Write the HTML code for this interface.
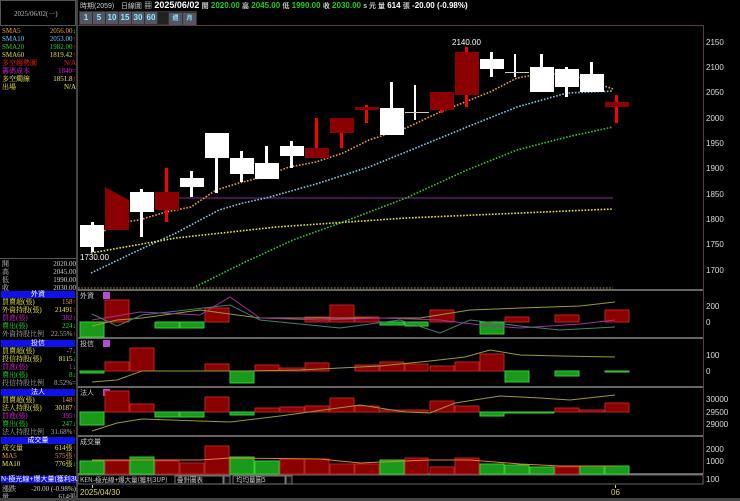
<!DOCTYPE html>
<html><head><meta charset="utf-8"><style>
*{margin:0;padding:0;box-sizing:border-box}
body{width:740px;height:501px;background:#000;overflow:hidden;position:relative;font-family:"Liberation Sans","Noto Sans CJK TC",sans-serif;color:#ccc}
.a{position:absolute;white-space:nowrap}
.s{font-size:7px;line-height:8px;font-family:"Liberation Serif","Noto Serif CJK SC",serif}
.hd{background:#1010e8;color:#fff;text-align:center;font-size:7px;line-height:7px}
</style></head><body>
<!-- left panel -->
<div class="a" style="left:0;top:0;width:76px;height:26px;border:1px solid #555;background:#000"></div>
<div class="a s" style="left:14px;top:10px;color:#bbb">2025/06/02(一)</div>
<div class="a" style="left:76px;top:0;width:2px;height:501px;background:#444"></div>
<div class="a s" style="left:2px;top:27px;width:74px">
<div style="color:#e0a040">SMA5<span style="float:right">2056.00<b style="color:#2d2">↓</b></span></div>
<div style="color:#6cf">SMA10<span style="float:right">2053.00<b style="color:#f22">↑</b></span></div>
<div style="color:#2c2">SMA20<span style="float:right">1982.00<b style="color:#f22">↑</b></span></div>
<div style="color:#dd4">SMA60<span style="float:right">1819.42<b style="color:#f22">↑</b></span></div>
<div style="color:#f22">多空趨勢圖<span style="float:right">N/A</span></div>
<div style="color:#d2d">籌碼成本<span style="float:right">1840=</span></div>
<div style="color:#ee4">多空燭線<span style="float:right">1851.8<b style="color:#f22">↑</b></span></div>
<div style="color:#ee4">出場<span style="float:right">N/A</span></div>
</div>
<div class="a" style="left:0;top:258px;width:76px;height:1px;background:#555"></div>
<div class="a s" style="left:2px;top:260px;width:74px;color:#ccc">
<div>開<span style="float:right">2020.00</span></div><div>高<span style="float:right">2045.00</span></div><div>低<span style="float:right">1990.00</span></div><div>收<span style="float:right">2030.00</span></div></div>
<div class="a hd" style="left:1px;top:291px;width:74px">外資</div>
<div class="a s" style="left:2px;top:298px;width:74px">
<div style="color:#ee4">買賣超(張)<span style="float:right;color:#e0a040">158<b style="color:#f22">↑</b></span></div>
<div style="color:#ee4">外資持股(張)<span style="float:right">21491<b style="color:#f22">↑</b></span></div>
<div style="color:#d2d">買進(張)<span style="float:right">382<b style="color:#f22">↑</b></span></div>
<div style="color:#2d2">賣出(張)<span style="float:right">224<b style="color:#2d2">↓</b></span></div>
<div style="color:#aaa">外資持股比例<span style="float:right">22.55%<b style="color:#f22">↑</b></span></div></div>
<div class="a hd" style="left:1px;top:340px;width:74px">投信</div>
<div class="a s" style="left:2px;top:347px;width:74px">
<div style="color:#ee4">買賣超(張)<span style="float:right;color:#e0a040">-7<b style="color:#2d2">↓</b></span></div>
<div style="color:#ee4">投信持股(張)<span style="float:right">8115<b style="color:#2d2">↓</b></span></div>
<div style="color:#d2d">買進(張)<span style="float:right">1<b style="color:#2d2">↓</b></span></div>
<div style="color:#2d2">賣出(張)<span style="float:right">8<b style="color:#2d2">↓</b></span></div>
<div style="color:#aaa">投信持股比例<span style="float:right">8.52%=</span></div></div>
<div class="a hd" style="left:1px;top:389px;width:74px">法人</div>
<div class="a s" style="left:2px;top:396px;width:74px">
<div style="color:#ee4">買賣超(張)<span style="float:right;color:#e0a040">148<b style="color:#f22">↑</b></span></div>
<div style="color:#ee4">法人持股(張)<span style="float:right">30187<b style="color:#f22">↑</b></span></div>
<div style="color:#d2d">買進(張)<span style="float:right">395<b style="color:#f22">↑</b></span></div>
<div style="color:#2d2">賣出(張)<span style="float:right">247<b style="color:#2d2">↓</b></span></div>
<div style="color:#aaa">法人持股比例<span style="float:right">31.68%<b style="color:#f22">↑</b></span></div></div>
<div class="a hd" style="left:1px;top:437px;width:74px">成交量</div>
<div class="a s" style="left:2px;top:444px;width:74px">
<div style="color:#ee4">成交量<span style="float:right">614張<b style="color:#f22">↑</b></span></div>
<div style="color:#e0a040">MA5<span style="float:right">575張<b style="color:#f22">↑</b></span></div>
<div style="color:#ee4">MA10<span style="float:right">776張<b style="color:#2d2">↓</b></span></div></div>
<div class="a hd" style="left:1px;top:476px;width:75px;text-align:left">N-極光線+爆大量(獲利3U)</div>
<div class="a s" style="left:2px;top:485px;width:74px;color:#ccc"><div>漲跌<span style="float:right">-20.00 (-0.98%)</span></div><div>量<span style="float:right">614張</span></div></div>

<!-- header -->
<div class="a" style="left:80px;top:1px;font-size:8px;line-height:9px;color:#ccc;font-weight:bold">
<span style="font-weight:normal;font-size:7px">時期(2059)</span>&nbsp;&nbsp;&nbsp;<span style="font-weight:normal;font-size:7px">日線圖</span> ▦ <span style="color:#fff;font-size:9px">2025/06/02</span> <span style="font-size:7px">開</span> <span style="color:#2c2">2020.00</span> <span style="font-size:7px">高</span> <span style="color:#2c2">2045.00</span> <span style="font-size:7px">低</span> <span style="color:#2c2">1990.00</span> <span style="font-size:7px">收</span> <span style="color:#2c2">2030.00</span> <span style="font-size:7px">s 元 量</span> <span style="color:#fff">614</span> <span style="font-size:7px">張</span> <span style="color:#fff">-20.00 (-0.98%)</span></div>
<div class="a" style="left:79px;top:11px;height:14px;background:#333;width:118px"></div>
<div class="a" style="left:80px;top:12px;font-size:8px;line-height:12px;color:#8ef;font-weight:bold">
<span style="display:inline-block;width:12px;text-align:center;background:#556">1</span><span style="display:inline-block;width:12px;text-align:center;background:#556;margin-left:1px">5</span><span style="display:inline-block;width:12px;text-align:center;background:#556;margin-left:1px">10</span><span style="display:inline-block;width:12px;text-align:center;background:#556;margin-left:1px">15</span><span style="display:inline-block;width:12px;text-align:center;background:#556;margin-left:1px">30</span><span style="display:inline-block;width:12px;text-align:center;background:#556;margin-left:1px">60</span><span style="display:inline-block;width:10px;background:#222;margin-left:1px">&nbsp;</span><span style="display:inline-block;width:13px;text-align:center;background:#556;font-size:6px;margin-left:1px">週</span><span style="display:inline-block;width:13px;text-align:center;background:#556;font-size:6px;margin-left:1px">月</span></div>

<svg class="a" style="left:0;top:0" width="740" height="501">
<g fill="none" stroke="#5a3a3a"><line x1="78" y1="25.5" x2="703" y2="25.5"/><line x1="703.5" y1="25" x2="703.5" y2="474"/></g>
<g fill="none" stroke="#888" stroke-width="1.5"><line x1="78" y1="290" x2="703" y2="290"/><line x1="78" y1="338" x2="703" y2="338"/><line x1="78" y1="387" x2="703" y2="387"/><line x1="78" y1="436" x2="703" y2="436"/><line x1="78" y1="474" x2="703" y2="474"/></g>
<!-- axis labels -->
<g font-size="8" fill="#ddd" font-family="Liberation Sans,sans-serif">
<text x="706" y="45">2150</text><text x="706" y="70">2100</text><text x="706" y="95">2050</text><text x="706" y="121">2000</text><text x="706" y="146">1950</text><text x="706" y="171">1900</text><text x="706" y="197">1850</text><text x="706" y="222">1800</text><text x="706" y="247">1750</text><text x="706" y="273">1700</text>
<text x="706" y="309">200</text><text x="706" y="325">0</text><text x="706" y="358">100</text><text x="706" y="374">0</text>
<text x="706" y="402">30000</text><text x="706" y="415">29500</text><text x="706" y="427">29000</text>
<text x="706" y="452">2000</text><text x="706" y="464">1000</text><text x="706" y="482">100</text>
<text x="80" y="260" fill="#fff">1730.00</text><text x="452" y="45" fill="#fff">2140.00</text>
</g>
<!-- MAs -->
<g fill="none" stroke-width="1.6" stroke-dasharray="1.6 1.6">
<line x1="130" y1="198" x2="613" y2="198" stroke="#8a2a9a" stroke-dasharray="none" stroke-width="1"/>
<polyline stroke="#e8a040" points="91,240 116,223 139,220 166,212 191,207 216,190 239,183 263,177 289,167 316,162 343,153 369,140 406,128 440,112 490,92 517,78 540,74 567,74 587,80 613,89"/>
<polyline stroke="#80c8e8" points="91,273 139,250 176,233 219,210 243,203 266,198 316,184 369,167 406,152 467,127 517,107 567,93 613,91"/>
<polyline stroke="#2ec82e" points="193,288 243,263 293,240 343,222 406,198 467,170 517,150 567,137 613,127"/>
<polyline stroke="#e8e840" points="91,253 176,238 276,227 406,218 613,209"/>
<line x1="78" y1="288" x2="613" y2="288" stroke="#806030"/>
</g>
<!-- candles -->
<g>
<rect x="91" y="222" width="3" height="30" fill="#fff"/><rect x="80" y="225" width="24" height="22" fill="#fff"/>
<polygon points="105,187 129,200 129,230 105,230" fill="#8b0000"/>
<rect x="140" y="189" width="3" height="48" fill="#fff"/><rect x="130" y="192" width="24" height="20" fill="#fff"/>
<rect x="165" y="168" width="3" height="54" fill="#f00"/><rect x="155" y="192" width="24" height="18" fill="#8b0000"/>
<rect x="190" y="171" width="3" height="26" fill="#fff"/><rect x="180" y="178" width="24" height="9" fill="#fff"/>
<rect x="215" y="133" width="3" height="60" fill="#fff"/><rect x="205" y="133" width="24" height="25" fill="#fff"/>
<rect x="240" y="151" width="3" height="31" fill="#fff"/><rect x="230" y="158" width="24" height="16" fill="#fff"/>
<rect x="265" y="146" width="3" height="33" fill="#fff"/><rect x="255" y="163" width="24" height="16" fill="#fff"/>
<rect x="290" y="141" width="3" height="27" fill="#fff"/><rect x="280" y="146" width="24" height="10" fill="#fff"/>
<rect x="315" y="118" width="3" height="40" fill="#f00"/><rect x="305" y="148" width="24" height="10" fill="#8b0000"/>
<rect x="340" y="118" width="3" height="30" fill="#f00"/><rect x="330" y="118" width="24" height="15" fill="#8b0000"/>
<rect x="365" y="105" width="3" height="18" fill="#f00"/><rect x="355" y="107" width="24" height="3" fill="#8b0000"/>
<rect x="390" y="82" width="3" height="53" fill="#fff"/><rect x="380" y="108" width="24" height="27" fill="#fff"/>
<rect x="414" y="85" width="2" height="35" fill="#fff"/><rect x="405" y="112" width="24" height="1" fill="#ccc"/>
<rect x="440" y="92" width="3" height="21" fill="#f00"/><rect x="430" y="92" width="24" height="18" fill="#8b0000"/>
<rect x="465" y="47" width="3" height="60" fill="#f00"/><rect x="455" y="52" width="24" height="43" fill="#8b0000"/>
<rect x="490" y="52" width="3" height="25" fill="#fff"/><rect x="480" y="59" width="24" height="10" fill="#fff"/>
<rect x="514" y="54" width="2" height="23" fill="#fff"/><rect x="505" y="72" width="24" height="1" fill="#ccc"/>
<rect x="540" y="54" width="3" height="38" fill="#fff"/><rect x="530" y="67" width="24" height="25" fill="#fff"/>
<rect x="565" y="67" width="3" height="30" fill="#fff"/><rect x="555" y="69" width="24" height="18" fill="#fff"/>
<rect x="590" y="62" width="3" height="30" fill="#fff"/><rect x="580" y="74" width="24" height="18" fill="#fff"/>
<rect x="615" y="95" width="3" height="28" fill="#f00"/><rect x="605" y="102" width="24" height="5" fill="#8b0000"/>
</g>
<!-- sub panels -->
<g font-size="7" fill="#ccc" font-family="Noto Sans CJK TC,sans-serif"><text x="80" y="298">外資</text><text x="80" y="346">投信</text><text x="80" y="395">法人</text><text x="80" y="444">成交量</text></g>
<g fill="#b050d0"><rect x="103" y="292" width="7" height="7"/><rect x="103" y="340" width="7" height="7"/><rect x="103" y="389" width="7" height="7"/></g>
<g stroke-width="1">
<!-- foreign -->
<g fill="#1a9a1a" stroke="#3c3"><rect x="80" y="322" width="24" height="15"/><rect x="155" y="322" width="24" height="6"/><rect x="180" y="322" width="24" height="6"/><rect x="380" y="322" width="24" height="3"/><rect x="405" y="322" width="23" height="4"/><rect x="480" y="322" width="24" height="12"/></g>
<g fill="#8b0000" stroke="#b22"><rect x="105" y="300" width="24" height="22"/><rect x="205" y="308" width="24" height="14"/><rect x="305" y="317" width="24" height="5"/><rect x="330" y="305" width="24" height="17"/><rect x="355" y="317" width="24" height="5"/><rect x="430" y="310" width="24" height="12"/><rect x="505" y="317" width="24" height="5"/><rect x="555" y="315" width="24" height="7"/><rect x="605" y="310" width="24" height="12"/></g>
<polyline fill="none" stroke="#9a9a30" points="92,326 117,320 142,318 200,310 260,318 340,318 420,318 470,310 520,308 580,306 615,302"/>
<polyline fill="none" stroke="#a030a0" points="92,320 140,312 200,315 230,297 260,318 320,320 380,318 440,320 480,325 520,328 580,324 615,320"/>
<polyline fill="none" stroke="#408070" points="92,314 117,326 142,315 230,305 260,320 340,328 400,320 440,333 470,320 520,326 560,330 615,327"/>
<!-- trust -->
<g fill="#1a9a1a" stroke="#3c3"><rect x="80" y="371" width="24" height="2"/><rect x="230" y="371" width="24" height="12"/><rect x="505" y="371" width="24" height="11"/><rect x="555" y="371" width="24" height="5"/><rect x="605" y="371" width="24" height="1"/></g>
<g fill="#8b0000" stroke="#b22"><rect x="105" y="362" width="24" height="9"/><rect x="130" y="348" width="24" height="23"/><rect x="205" y="364" width="24" height="7"/><rect x="255" y="365" width="24" height="6"/><rect x="280" y="368" width="24" height="3"/><rect x="305" y="363" width="24" height="8"/><rect x="355" y="365" width="24" height="6"/><rect x="380" y="362" width="24" height="9"/><rect x="405" y="364" width="23" height="7"/><rect x="430" y="366" width="24" height="5"/><rect x="455" y="362" width="24" height="9"/><rect x="480" y="354" width="24" height="17"/></g>
<polyline fill="none" stroke="#9a9a30" points="92,382 117,380 142,371 250,371 300,370 380,366 430,361 465,357 490,350 520,355 560,356 615,357"/>
<!-- inst -->
<g fill="#1a9a1a" stroke="#3c3"><rect x="80" y="412" width="24" height="13"/><rect x="155" y="412" width="24" height="5"/><rect x="180" y="412" width="24" height="5"/><rect x="230" y="412" width="24" height="3"/><rect x="480" y="412" width="24" height="4"/><rect x="505" y="412" width="24" height="1"/><rect x="530" y="412" width="24" height="1"/></g>
<g fill="#8b0000" stroke="#b22"><rect x="105" y="391" width="24" height="21"/><rect x="130" y="404" width="24" height="8"/><rect x="205" y="397" width="24" height="15"/><rect x="255" y="408" width="24" height="4"/><rect x="280" y="407" width="24" height="5"/><rect x="305" y="406" width="24" height="6"/><rect x="330" y="398" width="24" height="14"/><rect x="355" y="406" width="24" height="6"/><rect x="380" y="410" width="24" height="2"/><rect x="405" y="410" width="23" height="2"/><rect x="430" y="401" width="24" height="11"/><rect x="455" y="406" width="24" height="6"/><rect x="555" y="408" width="24" height="4"/><rect x="580" y="410" width="24" height="2"/><rect x="605" y="403" width="24" height="9"/></g>
<polyline fill="none" stroke="#9a9a30" points="92,431 117,423 142,419 200,421 230,422 280,416 360,405 405,412 430,413 455,403 500,396 540,398 570,400 615,395"/>
<!-- volume -->
<g fill="#1a9a1a" stroke="#3c3"><rect x="80" y="461" width="24" height="13"/><rect x="130" y="457" width="24" height="17"/><rect x="230" y="457" width="24" height="17"/><rect x="255" y="461" width="24" height="13"/><rect x="380" y="460" width="24" height="14"/><rect x="480" y="464" width="24" height="10"/><rect x="505" y="465" width="24" height="9"/><rect x="530" y="467" width="24" height="7"/><rect x="580" y="466" width="24" height="8"/><rect x="605" y="466" width="24" height="8"/></g>
<g fill="#8b0000" stroke="#b22"><rect x="105" y="461" width="24" height="13"/><rect x="155" y="461" width="24" height="13"/><rect x="180" y="463" width="24" height="11"/><rect x="205" y="446" width="24" height="28"/><rect x="280" y="459" width="24" height="15"/><rect x="305" y="459" width="24" height="15"/><rect x="330" y="464" width="24" height="10"/><rect x="355" y="464" width="24" height="10"/><rect x="405" y="458" width="23" height="16"/><rect x="430" y="467" width="24" height="7"/><rect x="455" y="458" width="24" height="16"/><rect x="555" y="467" width="24" height="7"/></g>
<polyline fill="none" stroke="#e08030" points="92,460 200,460 230,458 320,459 330,460 360,463 405,461 430,460 470,460 520,464 560,466 615,466"/>
</g>
<!-- bottom controls -->
<rect x="78" y="475" width="625" height="9" fill="#000" stroke="#666"/>
<text x="80" y="482" font-size="6.5" fill="#ccc" font-family="Noto Sans CJK TC,sans-serif">KEN-極光線+爆大量(獲利3UP)</text>
<rect x="175" y="476" width="48" height="8" fill="#000" stroke="#777"/><text x="177" y="482" font-size="6.5" fill="#ccc" font-family="Noto Sans CJK TC,sans-serif">疊針圖表</text>
<rect x="224" y="476" width="6" height="8" fill="#111" stroke="#777"/>
<rect x="233" y="476" width="52" height="8" fill="#000" stroke="#777"/><text x="236" y="482" font-size="6.5" fill="#ccc" font-family="Noto Sans CJK TC,sans-serif">均均量圖5</text>
<rect x="286" y="476" width="6" height="8" fill="#111" stroke="#777"/>
<text x="80" y="495" font-size="8" fill="#d8d860">2025/04/30</text><line x1="92.5" y1="485" x2="92.5" y2="488" stroke="#d8d860"/>
<text x="611" y="495" font-size="8" fill="#d8d860">06</text><line x1="615.5" y1="485" x2="615.5" y2="488" stroke="#d8d860"/>
<rect x="0" y="498" width="740" height="3" fill="#444"/>
</svg>
</body></html>
